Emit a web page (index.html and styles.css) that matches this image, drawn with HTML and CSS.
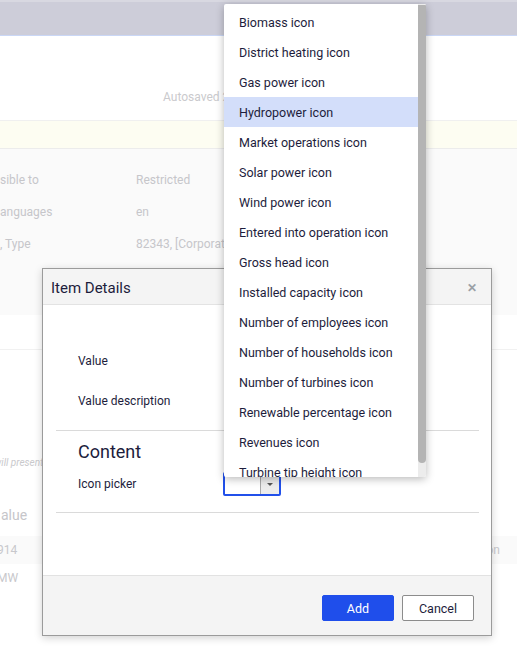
FILE: index.html
```html
<!DOCTYPE html>
<html lang="en">
<head>
<meta charset="utf-8">
<title>Item Details</title>
<link rel="stylesheet" href="styles.css">
</head>
<body>
<div class="page">
  <div class="topbar"></div>
  <div class="header">
    <span class="autosaved">Autosaved 2 minutes ago</span>
  </div>
  <div class="notice"></div>
  <div class="props">
    <div class="prop"><span class="prop-label">sible to</span><span class="prop-value">Restricted</span></div>
    <div class="prop"><span class="prop-label">anguages</span><span class="prop-value">en</span></div>
    <div class="prop"><span class="prop-label">, Type</span><span class="prop-value">82343, [Corporate]</span></div>
    <div class="prop"><span class="prop-label"></span><span class="prop-btn"></span></div>
  </div>
  <div class="tabs"></div>
  <div class="lower">
    <p class="hint">will present</p>
    <div class="col-head">alue</div>
    <div class="row shaded"><span>914</span><span class="row-right">on</span></div>
    <div class="row"><span>MW</span></div>
  </div>
</div>

<div class="dialog">
  <div class="dialog-head">
    <span class="dialog-title">Item Details</span>
    <span class="dialog-close">&#x2715;</span>
  </div>
  <div class="dialog-body">
    <div class="field"><span class="field-label">Value</span></div>
    <div class="field"><span class="field-label">Value description</span></div>
    <hr class="sep">
    <h2 class="section">Content</h2>
    <div class="field picker-row">
      <span class="field-label">Icon picker</span>
      <span class="select"><span class="select-value"></span><span class="select-arrow"></span></span>
    </div>
    <hr class="sep">
  </div>
  <div class="dialog-foot">
    <button class="btn btn-primary">Add</button>
    <button class="btn btn-default">Cancel</button>
  </div>
</div>

<div class="menu">
  <ul class="menu-list">
    <li>Biomass icon</li>
    <li>District heating icon</li>
    <li>Gas power icon</li>
    <li class="active">Hydropower icon</li>
    <li>Market operations icon</li>
    <li>Solar power icon</li>
    <li>Wind power icon</li>
    <li>Entered into operation icon</li>
    <li>Gross head icon</li>
    <li>Installed capacity icon</li>
    <li>Number of employees icon</li>
    <li>Number of households icon</li>
    <li>Number of turbines icon</li>
    <li>Renewable percentage icon</li>
    <li>Revenues icon</li>
    <li>Turbine tip height icon</li>
  </ul>
  <div class="scroll-track"><div class="scroll-thumb"></div></div>
</div>
</body>
</html>
```

FILE: styles.css
```css
html, body {
  margin: 0;
  padding: 0;
}
body {
  width: 517px;
  height: 654px;
  overflow: hidden;
  position: relative;
  background: #ffffff;
  font-family: Roboto, "Liberation Sans", sans-serif;
  font-size: 12px;
  color: #1d1d3c;
}
.page {
  display: flex;
  flex-direction: column;
}
.topbar {
  height: 33px;
  background: #cdcdd9;
  border-top: 2px solid #d8d8e1;
  border-bottom: 1px solid #cad7f6;
}
.header {
  height: 84px;
  display: flex;
  align-items: flex-end;
  padding-left: 163px;
  border-bottom: 1px solid #f0f0f0;
}
.autosaved {
  color: #cacacd;
  font-size: 12px;
  line-height: 14px;
  margin-bottom: 16px;
  white-space: nowrap;
}
.notice {
  height: 27px;
  background: #fdfdf2;
  border-bottom: 1px solid #ececec;
}
.props {
  background: #fafafa;
  padding-top: 15px;
  height: 151px;
  display: flex;
  flex-direction: column;
}
.prop {
  height: 32px;
  display: flex;
  align-items: center;
  color: #c6c6ca;
  font-size: 12px;
  white-space: nowrap;
}
.prop-label {
  width: 136px;
}
.prop-btn {
  margin-left: 2px;
  margin-top: 24px;
  width: 72px;
  height: 10px;
  border: 1px solid #dcdcdc;
  border-bottom: none;
  border-radius: 3px 3px 0 0;
  background: #fafafa;
}
.tabs {
  height: 34px;
  border-bottom: 1px solid #f1f1f1;
}
.lower {
  display: flex;
  flex-direction: column;
}
.hint {
  margin: 106px 0 0 -6px;
  font-size: 10px;
  font-style: italic;
  color: #c9c9cc;
  white-space: nowrap;
  line-height: 14px;
}
.col-head {
  margin-top: 36px;
  margin-left: 1px;
  font-size: 14px;
  color: #c6c6ca;
  line-height: 18px;
}
.row {
  height: 28px;
  display: flex;
  align-items: center;
  justify-content: space-between;
  color: #c8c8cc;
  font-size: 12px;
  margin-left: -3px;
}
.row.shaded {
  margin-top: 12px;
  background: #fafafa;
}
.row-right {
  margin-right: 17px;
}

/* dialog */
.dialog {
  position: absolute;
  left: 42px;
  top: 268px;
  width: 448px;
  height: 366px;
  border: 1px solid #9b9b9b;
  background: #ffffff;
  box-shadow: 0 2px 8px rgba(0, 0, 0, 0.18);
  display: flex;
  flex-direction: column;
}
.dialog-head {
  height: 36px;
  background: #f4f4f4;
  border-bottom: 1px solid #e3e3e3;
  display: flex;
  align-items: center;
  justify-content: space-between;
  padding: 2px 14px 0 8px;
  box-sizing: border-box;
}
.dialog-title {
  font-size: 15px;
  color: #1d1d3c;
}
.dialog-close {
  font-size: 12px;
  color: #9aa0a6;
  font-weight: bold;
}
.dialog-body {
  flex: 1;
  padding: 36px 12px 0 13px;
  display: flex;
  flex-direction: column;
}
.field {
  height: 40px;
  display: flex;
  align-items: center;
  padding-left: 22px;
}
.field-label {
  width: 145px;
  font-size: 12px;
  color: #1d1d3c;
}
.sep {
  margin: 9px 0 0 0;
  border: none;
  border-top: 1px solid #dadada;
  height: 0;
}
.section {
  margin: 10px 0 0 22px;
  font-size: 18px;
  font-weight: normal;
  line-height: 22px;
  color: #1d1d3c;
}
.picker-row {
  height: 26px;
  margin-top: 8px;
}
.select {
  display: flex;
  width: 54px;
  height: 20px;
  border: 2px solid #2150ea;
  border-radius: 2px;
  background: #fff;
}
.select-value {
  flex: 1;
}
.select-arrow {
  width: 18px;
  background: #ececec;
  border-left: 1px solid #a9a9a9;
  position: relative;
}
.select-arrow::after {
  content: "";
  position: absolute;
  left: 6px;
  top: 9px;
  border-left: 3px solid transparent;
  border-right: 3px solid transparent;
  border-top: 3px solid #555;
}
.picker-row + .sep {
  margin-top: 15px;
}
.dialog-foot {
  height: 60px;
  background: #f4f4f4;
  border-top: 1px solid #e2e2e2;
  display: flex;
  align-items: flex-start;
  justify-content: flex-end;
  gap: 8px;
  padding: 19px 17px 0 0;
  box-sizing: border-box;
}
.btn {
  width: 72px;
  height: 26px;
  border-radius: 2px;
  font-family: Roboto, "Liberation Sans", sans-serif;
  font-size: 12.5px;
  padding: 0;
  cursor: pointer;
}
.btn-primary {
  background: #1f4eeb;
  color: #ffffff;
  border: 1px solid #1f4eeb;
}
.btn-default {
  background: #ffffff;
  color: #1d1d3c;
  border: 1px solid #8c8c8c;
}

/* dropdown menu */
.menu {
  position: absolute;
  left: 224px;
  top: 4px;
  width: 202px;
  height: 473px;
  background: #ffffff;
  box-shadow: 0 2px 8px rgba(0, 0, 0, 0.28);
  border-radius: 2px;
  overflow: hidden;
}
.menu-list {
  margin: 0;
  padding: 3px 8px 0 0;
  list-style: none;
}
.menu-list li {
  height: 30px;
  line-height: 31px;
  padding-left: 15px;
  font-size: 12.5px;
  color: #1d1d3c;
  white-space: nowrap;
}
.menu-list li.active {
  background: #d3defa;
}
.scroll-track {
  position: absolute;
  right: 0;
  top: 0;
  width: 8px;
  height: 100%;
  background: #ececec;
}
.scroll-thumb {
  margin-top: 1px;
  height: 458px;
  background: #b4b4b4;
  border-radius: 0 0 4px 4px;
}
```
